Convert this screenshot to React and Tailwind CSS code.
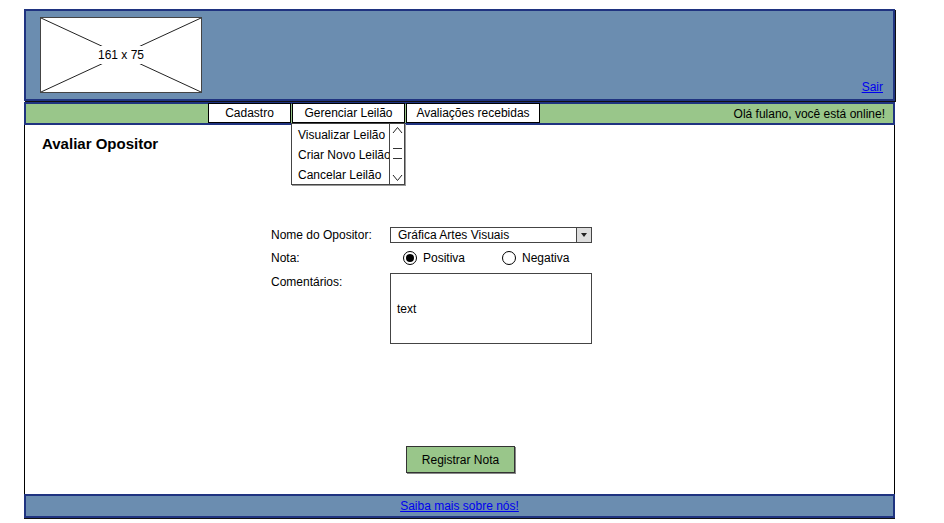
import React from "react";

const NavButton = ({ label, width }) => (
  <div
    className={`h-[20px] ${width} bg-white border border-black flex items-center justify-center text-[12px] text-black`}
  >
    {label}
  </div>
);

const Radio = ({ checked, label }) => (
  <div className="flex items-center gap-[6px]">
    <span className="w-[14px] h-[14px] rounded-full border border-black bg-white flex items-center justify-center">
      {checked && <span className="w-[8px] h-[8px] rounded-full bg-black" />}
    </span>
    <span>{label}</span>
  </div>
);

const App = () => {
  return (
    <div
      className="w-[944px] h-[523px] bg-white pl-[24px] pt-[9px]"
      style={{ fontFamily: '"Liberation Sans", "DejaVu Sans", sans-serif' }}
    >
      <div className="w-[871px] flex flex-col">
        {/* header */}
        <div className="h-[92px] bg-[#6b8db0] border-2 border-[#1f3380] shadow-[1px_1px_0_#111] flex justify-between pl-[14px] pt-[6px] pr-[10px]">
          <div className="relative w-[162px] h-[76px] bg-white border border-[#444]">
            <svg className="absolute inset-0" width="160" height="74" viewBox="0 0 160 74">
              <line x1="0" y1="0" x2="160" y2="74" stroke="#222" strokeWidth="1" />
              <line x1="160" y1="0" x2="0" y2="74" stroke="#222" strokeWidth="1" />
            </svg>
            <div className="absolute inset-0 flex items-center justify-center">
              <span className="bg-white px-[1px] text-[12px] text-black">161 x 75</span>
            </div>
          </div>
          <div className="flex items-end pb-[3px]">
            <a href="#" className="text-[12px] text-[#0000ee] underline">
              Sair
            </a>
          </div>
        </div>

        {/* menu bar */}
        <div className="mt-[1px] h-[23px] bg-[#99c68a] border-2 border-[#1f3380] flex items-center justify-between pl-[182px] pr-[8px]">
          <div className="relative flex gap-[1px] -mt-[2px]">
            <NavButton label="Cadastro" width="w-[83px]" />
            <div className="relative">
              <NavButton label="Gerenciar Leilão" width="w-[113px]" />
              <div className="absolute left-[-1px] top-[20px] w-[114px] h-[62px] bg-white border border-[#444] shadow-[1px_1px_0_#999] flex z-10">
                <div className="flex-1 overflow-hidden flex flex-col pl-[6px] pt-[1px] text-[12px] text-black leading-[20px] whitespace-nowrap">
                  <span>Visualizar Leilão</span>
                  <span>Criar Novo Leilão</span>
                  <span>Cancelar Leilão</span>
                </div>
                <div className="w-[15px] border-l border-[#444] flex flex-col items-center justify-between py-[2px] bg-white">
                  <svg width="11" height="8" viewBox="0 0 11 8">
                    <path d="M1 7 L5.5 1.5 L10 7" fill="none" stroke="#222" strokeWidth="1" />
                  </svg>
                  <div className="flex flex-col gap-[9px] w-[9px]">
                    <span className="h-[1px] bg-[#333]" />
                    <span className="h-[1px] bg-[#333]" />
                  </div>
                  <svg width="11" height="8" viewBox="0 0 11 8">
                    <path d="M1 1 L5.5 6.5 L10 1" fill="none" stroke="#222" strokeWidth="1" />
                  </svg>
                </div>
              </div>
            </div>
            <NavButton label="Avaliações recebidas" width="w-[134px]" />
          </div>
          <span className="text-[12px] text-black">Olá fulano, você está online!</span>
        </div>

        {/* content */}
        <div className="h-[369px] border-x border-black flex flex-col">
          <h1 className="pl-[17px] pt-[9px] text-[15px] font-bold text-black leading-[20px]">
            Avaliar Opositor
          </h1>
          <div className="mt-[73px] ml-[246px] grid grid-cols-[119px_202px] gap-y-[6px] text-[12px] text-black">
            <span className="leading-[16px]">Nome do Opositor:</span>
            <div className="h-[16px] border border-[#444] bg-white flex">
              <span className="flex-1 pl-[7px] leading-[14px]">Gráfica Artes Visuais</span>
              <span className="w-[15px] bg-[#ddd] border-l border-[#444] flex items-center justify-center">
                <svg width="6" height="4" viewBox="0 0 6 4">
                  <path d="M0 0 H6 L3 4 Z" fill="#222" />
                </svg>
              </span>
            </div>
            <span className="leading-[16px] pt-[1px]">Nota:</span>
            <div className="h-[18px] flex items-center gap-[37px] pl-[13px]">
              <Radio checked label="Positiva" />
              <Radio label="Negativa" />
            </div>
            <span className="leading-[16px] pt-[1px]">Comentários:</span>
            <div className="h-[71px] border border-[#444] bg-white flex items-center pl-[6px]">
              text
            </div>
          </div>
          <div className="mt-[102px] ml-[381px]">
            <button className="w-[109px] h-[27px] bg-[#99c68a] border border-[#333] shadow-[1px_1px_0_#888] text-[12px] text-black">
              Registrar Nota
            </button>
          </div>
        </div>

        {/* footer */}
        <div className="h-[24px] bg-[#6b8db0] border-2 border-[#1f3380] shadow-[0_1px_0_#111] flex items-center justify-center">
          <a href="#" className="text-[12px] text-[#0000ee] underline -mt-[1px]">
            Saiba mais sobre nós!
          </a>
        </div>
      </div>
    </div>
  );
};

export default App;
